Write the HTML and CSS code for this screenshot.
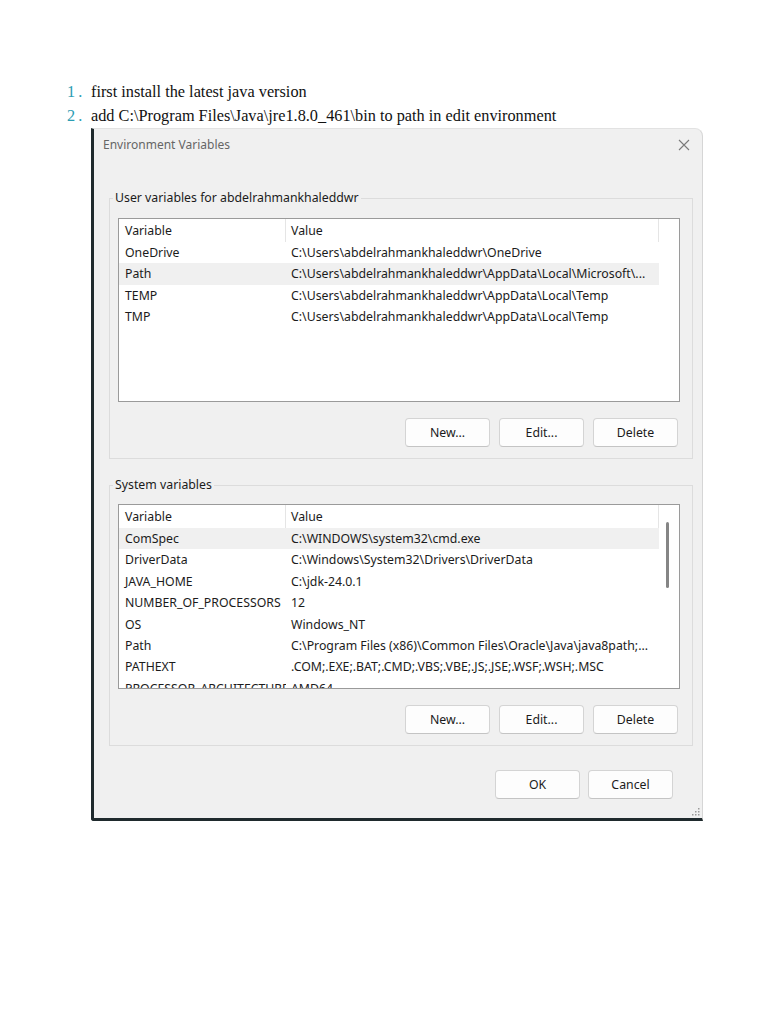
FILE: index.html
```html
<!DOCTYPE html>
<html lang="en">

<head>
    <meta charset="UTF-8">
    <meta name="viewport" content="width=device-width, initial-scale=1.0">
    <title>Add java to path</title>
    <link rel="stylesheet" href="styles.css">
</head>

<body>
    <ol class="steps">
        <li>first install the latest java version</li>
        <li>add C:\Program Files\Java\jre1.8.0_461\bin to path in edit environment</li>
    </ol>

    <div class="dialog">
        <div class="titlebar">
            <span class="title">Environment Variables</span>
            <svg class="close" width="12" height="12" viewBox="0 0 12 12">
                <path d="M1 1 L11 11 M11 1 L1 11" stroke="#7a7a7a" stroke-width="1.1" fill="none" />
            </svg>
        </div>

        <div class="dialog-body">
            <fieldset class="group">
                <legend>User variables for abdelrahmankhaleddwr</legend>
                <div class="listview">
                    <div class="row head"><span>Variable</span><span>Value</span><span></span></div>
                    <div class="row"><span>OneDrive</span><span>C:\Users\abdelrahmankhaleddwr\OneDrive</span><span></span></div>
                    <div class="row selected"><span>Path</span><span>C:\Users\abdelrahmankhaleddwr\AppData\Local\Microsoft\...</span><span></span></div>
                    <div class="row"><span>TEMP</span><span>C:\Users\abdelrahmankhaleddwr\AppData\Local\Temp</span><span></span></div>
                    <div class="row"><span>TMP</span><span>C:\Users\abdelrahmankhaleddwr\AppData\Local\Temp</span><span></span></div>
                </div>
                <div class="btns">
                    <button>New...</button>
                    <button>Edit...</button>
                    <button>Delete</button>
                </div>
            </fieldset>

            <fieldset class="group second">
                <legend>System variables</legend>
                <div class="listview">
                    <div class="row head"><span>Variable</span><span>Value</span><span></span></div>
                    <div class="row selected"><span>ComSpec</span><span>C:\WINDOWS\system32\cmd.exe</span><span></span></div>
                    <div class="row"><span>DriverData</span><span>C:\Windows\System32\Drivers\DriverData</span><span></span></div>
                    <div class="row"><span>JAVA_HOME</span><span>C:\jdk-24.0.1</span><span></span></div>
                    <div class="row"><span>NUMBER_OF_PROCESSORS</span><span>12</span><span></span></div>
                    <div class="row"><span>OS</span><span>Windows_NT</span><span></span></div>
                    <div class="row"><span>Path</span><span>C:\Program Files (x86)\Common Files\Oracle\Java\java8path;...</span><span></span></div>
                    <div class="row"><span>PATHEXT</span><span>.COM;.EXE;.BAT;.CMD;.VBS;.VBE;.JS;.JSE;.WSF;.WSH;.MSC</span><span></span></div>
                    <div class="row"><span>PROCESSOR_ARCHITECTURE</span><span>AMD64</span><span></span></div>
                    <div class="scrollthumb"></div>
                </div>
                <div class="btns">
                    <button>New...</button>
                    <button>Edit...</button>
                    <button>Delete</button>
                </div>
            </fieldset>

            <div class="footer">
                <button>OK</button>
                <button>Cancel</button>
            </div>
        </div>

        <!-- resize grip dots -->
        <svg class="grip" width="9" height="9" viewBox="0 0 9 9">
            <rect x="7" y="1" width="1.5" height="1.5" fill="#9a9a9a" />
            <rect x="4" y="4" width="1.5" height="1.5" fill="#9a9a9a" />
            <rect x="7" y="4" width="1.5" height="1.5" fill="#9a9a9a" />
            <rect x="1" y="7" width="1.5" height="1.5" fill="#9a9a9a" />
            <rect x="4" y="7" width="1.5" height="1.5" fill="#9a9a9a" />
            <rect x="7" y="7" width="1.5" height="1.5" fill="#9a9a9a" />
        </svg>
    </div>
</body>

</html>
```

FILE: styles.css
```css
* {
    padding: 0;
    margin: 0;
    box-sizing: border-box;
}

body {
    background: white;
    font-family: "Liberation Serif", serif;
    color: #111;
}

/* numbered instructions above the screenshot */
.steps {
    list-style: none;
    counter-reset: step;
    padding-top: 80px;
    padding-left: 67px;
    font-size: 16.3px;
    line-height: 24px;
}

.steps li {
    counter-increment: step;
    display: flex;
}

.steps li::before {
    content: counter(step) ".";
    width: 24px;
    color: #2b9db3;
    letter-spacing: 3px;
}

/* the windows dialog */
.dialog {
    position: relative;
    margin-left: 91px;
    width: 612px;
    height: 693px;
    background: #f0f0f0;
    border-left: 3px solid #1f2a2d;
    border-bottom: 3px solid #1f2a2d;
    border-right: 1px solid #d6d6d6;
    border-top: 1px solid #e2e2e2;
    border-top-right-radius: 8px;
    border-bottom-left-radius: 3px;
    font-family: "Noto Sans", sans-serif;
    font-size: 12.3px;
    color: #1b1b1b;
}

.titlebar {
    height: 31px;
    display: flex;
    align-items: center;
    justify-content: space-between;
    padding-left: 9px;
    padding-right: 12px;
    font-size: 12px;
}

.title {
    color: #666;
}

.dialog-body {
    padding: 30px 9px 0 15px;
}

.group {
    border: 1px solid #dcdcdc;
    padding: 12px 12px 11px 8px;
}

.group legend {
    margin-left: -5px;
    padding: 0 2px;
    line-height: 16px;
}

.group.second {
    margin-top: 18px;
    padding-top: 11px;
}

.listview {
    position: relative;
    height: 184px;
    background: white;
    border: 1px solid #9a9a9a;
    overflow: hidden;
}

.row {
    display: grid;
    grid-template-columns: 167px 373px 1fr;
    height: 21.4px;
    line-height: 21.4px;
    white-space: nowrap;
}

.row span {
    padding-left: 6px;
    overflow: hidden;
}

.row span:nth-child(2) {
    padding-left: 5px;
}

.row.head {
    height: 23px;
    line-height: 23px;
}

.row.head span:nth-child(-n+2) {
    border-right: 1px solid #e5e5e5;
}

.row.selected span:nth-child(-n+2) {
    background: #f0f0f0;
}

.second .listview {
    height: 185px;
}

.scrollthumb {
    position: absolute;
    left: 547px;
    top: 17px;
    width: 3px;
    height: 66px;
    border-radius: 2px;
    background: #858585;
}

.btns,
.footer {
    display: flex;
    justify-content: flex-end;
    gap: 9px;
}

.btns {
    margin-top: 16px;
    padding-right: 2px;
}

.footer {
    margin-top: 24px;
    padding-right: 20px;
    gap: 8px;
}

button {
    width: 85px;
    height: 29px;
    background: #fdfdfd;
    border: 1px solid #d4d4d4;
    border-bottom-color: #c4c4c4;
    border-radius: 4px;
    font-family: "Noto Sans", sans-serif;
    font-size: 12.3px;
    color: #1b1b1b;
}

.grip {
    position: absolute;
    right: 2px;
    bottom: 2px;
}
```
